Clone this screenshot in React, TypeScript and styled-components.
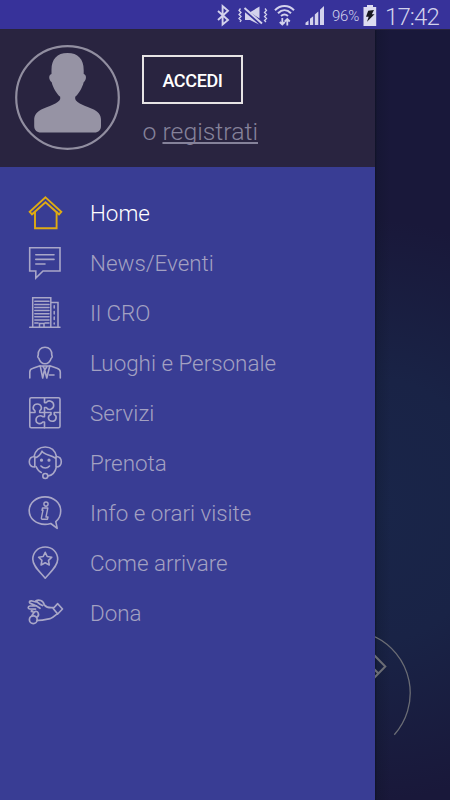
import React from "react";
import styled, { createGlobalStyle } from "styled-components";

const Global = createGlobalStyle`
  * { box-sizing: border-box; }
  body { margin: 0; background: #19183a; font-family: Roboto, "Liberation Sans", sans-serif; }
`;

const Screen = styled.div`
  width: 450px;
  height: 800px;
  display: flex;
  flex-direction: column;
  overflow: hidden;
`;

const StatusBar = styled.header`
  height: 30px;
  flex: none;
  display: flex;
  align-items: center;
  justify-content: flex-end;
  padding: 3px 10px 0 0;
  background: #37329a;
  border-bottom: 1px solid #29243b;
  color: #d3d2ec;
`;

const StatusIcons = styled.svg`
  width: 115px;
  height: 28px;
  margin: 0 2px 0 0;
  flex: none;
`;

const Percent = styled.span`
  width: 29px;
  font-size: 15px;
  font-weight: 300;
  line-height: 30px;
  letter-spacing: -0.2px;
  white-space: nowrap;
`;

const Battery = styled.svg`
  width: 14px;
  height: 28px;
  margin: 0 8px 0 2px;
  flex: none;
`;

const Clock = styled.span`
  width: 55px;
  font-size: 24px;
  font-weight: 300;
  line-height: 28px;
  padding-top: 2px;
  letter-spacing: -0.9px;
  white-space: nowrap;
`;

const Body = styled.div`
  flex: 1;
  display: flex;
`;

const Drawer = styled.aside`
  width: 375px;
  flex: none;
  display: flex;
  flex-direction: column;
  background: #393d94;
`;

const Profile = styled.section`
  height: 137px;
  flex: none;
  display: flex;
  gap: 22px;
  padding: 15px;
  background: #292440;
`;

const Avatar = styled.svg`
  width: 105px;
  height: 105px;
  flex: none;
`;

const Account = styled.div`
  display: flex;
  flex-direction: column;
  align-items: flex-start;
  padding-top: 10px;
`;

const LoginButton = styled.button`
  width: 101px;
  height: 49px;
  padding: 2px 0 0;
  border: 2px solid #e6e3e4;
  background: transparent;
  color: #fff;
  font: 500 18px/20px Roboto, "Liberation Sans", sans-serif;
  letter-spacing: -0.35px;
`;

const Register = styled.p`
  margin: 12px 0 0 0.5px;
  color: #85829a;
  font-size: 24.8px;
  font-weight: 300;
  line-height: 32px;
`;

const Underlined = styled.span`
  text-decoration: underline;
  text-decoration-thickness: 1.5px;
  text-underline-offset: 2px;
  text-decoration-skip-ink: none;
`;

const Menu = styled.nav`
  display: flex;
  flex-direction: column;
  padding-top: 21px;
`;

const MenuItem = styled.a<{ $active?: boolean }>`
  height: 50px;
  display: flex;
  align-items: center;
  padding-left: 28px;
  gap: 26px;
  color: ${(p) => (p.$active ? "#fff" : "#a3a1c2")};
`;

const MenuIcon = styled.svg<{ $active?: boolean }>`
  width: 36px;
  height: 34px;
  flex: none;
  overflow: visible;
  fill: none;
  stroke: ${(p) => (p.$active ? "#dfab12" : "#a9a7c8")};
  stroke-width: 1.6;
  stroke-linejoin: round;
  stroke-linecap: round;
`;

const MenuLabel = styled.span`
  font-size: 22.4px;
  font-weight: 300;
  line-height: 30px;
  white-space: nowrap;
`;

const Backdrop = styled.main`
  width: 75px;
  background:
    linear-gradient(90deg, rgba(8, 15, 25, 0.6), rgba(8, 15, 25, 0.18) 2px, transparent 16px),
    radial-gradient(240px 290px at 5px 480px, #192549 0%, #192346 45%, transparent 100%),
    #19183a;
`;

const ContentRing = styled.svg`
  display: block;
  width: 75px;
  height: 770px;
  fill: none;
  stroke: #6b6d75;
`;

const icons: Record<string, React.ReactNode> = {
  home: (
    <g strokeLinejoin="miter" strokeWidth="1.9">
      <path d="M17.5 1.4 33.3 15.8 31 18.3 17.5 6.3 4 18.3 1.7 15.8Z" />
      <path d="M7 16V32.2H28.6V16" />
    </g>
  ),
  news: (
    <g strokeLinejoin="miter">
      <path d="M1.7 1.8H32V25H15L7.8 32V25H1.7Z" />
      <path d="M7.8 8.8H26M7.8 13.4H26M7.8 18H17" />
    </g>
  ),
  building: (
    <g strokeLinejoin="miter" strokeWidth="1.5">
      <path d="M4.7 30.5V1.7H22.8V30.5M22.8 6.4H30V30.5M1.7 31.3H32" />
      <path d="M6.8 5.3H21M6.8 8.4H21M6.8 11.5H21M6.8 14.6H21M6.8 17.7H21M6.8 20.8H21M6.8 23.9H21M6.8 27H10M17 27H21M11.5 31V27.5H16V31M26.2 9.8V12M26.2 15.5V18M26.2 21V23.5M26.2 27V28" />
    </g>
  ),
  person: (
    <g>
      <path d="M10.2 9.2C10 4 12.8 1.3 17 1.3S24 4 23.8 9.2C24.7 10.5 24 12 23.2 12.2 22 16 19.5 17.8 17 17.8S12 16 10.8 12.2C10 12 9.3 10.5 10.2 9.2Z" />
      <path d="M1.8 32V26C1.8 23.5 3 22.7 5 22.2L12.2 19.8 14.7 32 16.6 23.5 18.8 32 21.8 19.8 29 22.2C31.4 23 32.3 23.8 32.3 26V32M13 20H21M15 20.5 17 23.5 19 20.5M21.5 29H26" />
    </g>
  ),
  puzzle: (
    <g>
      <rect x="1.8" y="1.8" width="30.2" height="30" rx="1.5" />
      <path d="M1.8 16.5H7V14.8C3.5 12.5 5.5 8 9.3 8S15 12.5 11.7 14.8V16.5H23V18.5C18.8 20 20 25.3 24.2 25.3S29.5 20 26.2 18.5V16.5H32M16.5 1.8V6.6H18.3C20.5 3.4 25.7 5.2 25.7 9.3S20.5 15 18.3 11.5H16.5V20.7H14.8C12.5 18.5 8 20.3 8 24S12.5 28.8 14.8 26H16.5V31.8" />
    </g>
  ),
  support: (
    <g>
      <path d="M6 10.5C7.5 4 11.7 1 17.2 1S27 4 28.5 10.5M6.8 10.5V21C3.3 21 1.3 18.8 1.3 15.8S3.3 10.5 6.8 10.5ZM28 10.5C31.5 10.5 33.3 12.8 33.3 15.8S31.5 21 28 21ZM6.9 12C12 10.5 13 7.5 14 5.2 16 8.8 21 8.5 27.7 12.3M28.4 21C27 27 24 29.5 20 30" />
      <circle cx="17.3" cy="30" r="2.5" />
      <path d="M13 20C15 22.7 19.5 22.7 21.5 20" />
      <circle cx="13.5" cy="14.2" r=".8" />
      <circle cx="21" cy="14.2" r=".8" />
      <path d="M8 20.5C9.3 23.5 11 25.5 13.3 26.5" />
    </g>
  ),
  info: (
    <g>
      <path d="M27.8 25.6C31 23 32.7 19 32.7 15 32.7 7 25.8 .9 17 .9S1.2 7 1.2 14.7 8 28.4 17 28.4C19.5 28.4 21 28 22.8 27.5L29.2 32.3Z" />
      <circle cx="18" cy="8.1" r="2.1" strokeWidth="1.4" />
      <path d="M14.5 12H19.8L18 21H20L19.5 23.2H14.2C13.5 23.2 13.3 22.5 13.4 21.8L15 14.2H14Z" strokeWidth="1.4" />
    </g>
  ),
  pin: (
    <g>
      <path d="M17.2 32.2C11.5 25.5 4.8 20 4.8 13.3 4.8 6.2 10.2 1 17.2 1S29.7 6.2 29.7 13.3C29.7 20 22.9 25.5 17.2 32.2Z" />
      <path d="M17.2 6.3 19.2 10.5 23.8 11.2 20.5 14.4 21.3 19 17.2 16.8 13.1 19 13.9 14.4 10.6 11.2 15.2 10.5Z" />
    </g>
  ),
  donate: (
    <g strokeWidth="1.7">
      <circle cx="5.3" cy="23.7" r="3.9" />
      <path d="M4 19.5 6.2 16.2C9.5 13.5 12.5 19 8.7 21.3M9 24.3C13 24.8 19 23.2 22 22.7 26 21.5 27 19 29.2 18M25.3 11.5C21 12.2 18.5 11.3 16.2 8.8 15.5 4.2 10.5 3 7.8 5L12 8.2M8 6 3.2 4.8C.8 5 .8 7 3 7.6L8.5 10 2 10C-.3 10.3-.3 12.7 1.7 13L7.5 13.2M12 8.2 14.5 9.5M8.5 10 12 12.3M7.5 13.2C5.4 12.8 3 14 3.4 15.5L6.2 16.2M29.7 7.7 34.5 13 29.7 18 25.2 12.5Z" />
    </g>
  ),
};

const entries = [
  { icon: "home", label: "Home", active: true },
  { icon: "news", label: "News/Eventi" },
  { icon: "building", label: "Il CRO" },
  { icon: "person", label: "Luoghi e Personale" },
  { icon: "puzzle", label: "Servizi" },
  { icon: "support", label: "Prenota" },
  { icon: "info", label: "Info e orari visite" },
  { icon: "pin", label: "Come arrivare" },
  { icon: "donate", label: "Dona" },
];

export default function App() {
  return (
    <Screen>
      <Global />
      <StatusBar>
        <StatusIcons viewBox="215 2 115 28" fill="none" stroke="currentColor">
          <path d="M218 11 228 20 222.6 24.4V6L228 10.7 218 20" strokeWidth="1.9" />
          <path d="M250 12.3 259.5 6.5V18.5ZM245 12.3 250 16.5 259 24.5 250 20H245Z" fill="currentColor" stroke="none" />
          <path d="M244.5 8 262 23.5" strokeWidth="2" />
          <path d="M240.5 8.5 239 10.5 241 12.5 239 14.5 241 16.5 239 18.5 241 20.5 240 22M265 8.5 266.5 10.5 264.5 12.5 266.5 14.5 264.5 16.5 266.5 18.5 264.5 20.5 266 22" strokeWidth="1.3" />
          <path d="M275 10.2C280.5 4.6 288.5 4.6 294 10.2M278 13.2C282 9.2 287 9.2 291 13.2M281 16C283.3 14 285.7 14 288 16" strokeWidth="2" />
          <path d="M282.3 18V24.5M279.8 22 282.3 24.5 284.8 22M287.3 25.5V19M284.8 21.5 287.3 19 289.8 21.5" strokeWidth="1.8" />
          <path d="M305.5 25V22.7L308.5 20.5V25ZM310 25V18.7L313.2 16.2V25ZM314.8 25V14.5L318.3 11.4V25ZM320 25V9.8L324 6V25Z" fill="currentColor" stroke="none" />
        </StatusIcons>
        <Percent>96%</Percent>
        <Battery viewBox="0 0 14 28">
          <path d="M4 3H10V5H13.2V24H.5V5H4Z" fill="#dddcf0" />
          <path d="M5.2 8.7 11 8 8.8 12.3H11.5L4 19.7 5.7 14.8H3Z" fill="#17171f" />
        </Battery>
        <Clock>17:42</Clock>
      </StatusBar>
      <Body>
        <Drawer>
          <Profile>
            <Avatar viewBox="0 0 105 105">
              <circle cx="52.5" cy="52.5" r="51.3" fill="none" stroke="#918ea0" strokeWidth="2.2" />
              <path fill="#9693a4" d="M36.5 29V25C36.5 14 42 8 52.5 8S68.7 14 68.7 25V29C71.8 29.5 71.7 35 68.7 37.2 67.2 43 63.5 49 60.2 51.8V54C61 58 73 62 77 63.8 83.5 66.5 86 70 86 75V81C86 85 83.5 87.5 79.5 87.5H25.8C21.8 87.5 19.2 85 19.2 81V75C19.2 70 21.8 66.5 28 63.8 32 62 44.2 58 45.2 54V51.8C42 49 38 43 36.7 37.2 33.5 35 33.4 29.5 36.5 29Z" />
            </Avatar>
            <Account>
              <LoginButton>ACCEDI</LoginButton>
              <Register>o <Underlined>registrati</Underlined></Register>
            </Account>
          </Profile>
          <Menu>
            {entries.map((e) => (
              <MenuItem key={e.icon} $active={e.active}>
                <MenuIcon viewBox="0 0 36 34" $active={e.active}>{icons[e.icon]}</MenuIcon>
                <MenuLabel>{e.label}</MenuLabel>
              </MenuItem>
            ))}
          </Menu>
        </Drawer>
        <Backdrop>
          <ContentRing viewBox="375 30 75 770">
            <path d="M375 636.8A62.5 62.5 0 0 1 394.3 734.7" strokeWidth="1.3" />
            <path d="M374 655 385.3 666.5 374 678M374 669 378.5 673.5" strokeWidth="2" />
          </ContentRing>
        </Backdrop>
      </Body>
    </Screen>
  );
}
